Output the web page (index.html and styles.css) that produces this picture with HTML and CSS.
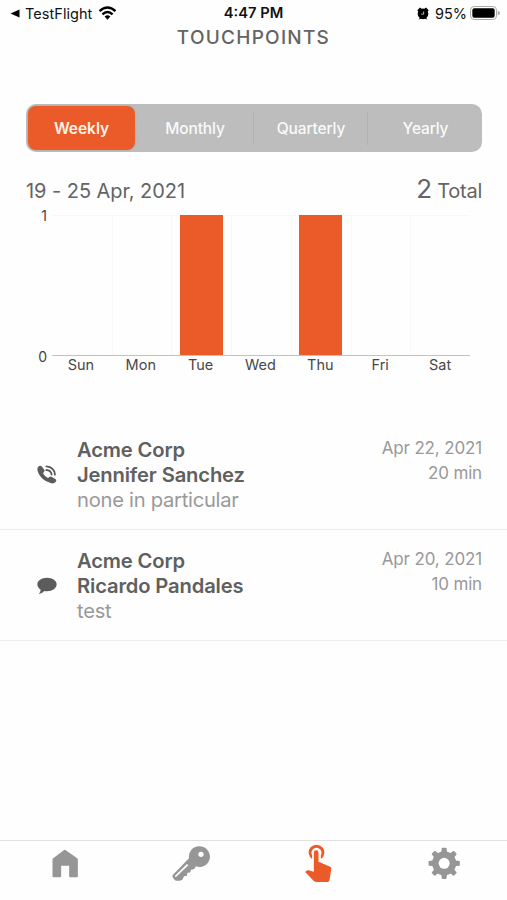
FILE: index.html
```html
<!DOCTYPE html>
<html lang="en">
<head>
<meta charset="utf-8">
<title>Touchpoints</title>
<link rel="stylesheet" href="styles.css">
</head>
<body>
<header class="status">
  <div class="status-left">
    <svg class="back" viewBox="0 0 10 10"><path d="M0 5 10 0.5v9z"/></svg>
    <span class="app-name">TestFlight</span>
    <svg class="wifi" viewBox="0 0 56 44"><g fill="none" stroke="#000" stroke-width="7.500"><path d="M3 16Q28-6 53 16"/><path d="M12 26Q28 11 44 26"/></g><path d="M19 33Q28 25 37 33L28 43z"/></svg>
  </div>
  <span class="clock">4:47 PM</span>
  <div class="status-right">
    <svg class="alarm" viewBox="0 0 36 38"><circle cx="18" cy="20" r="16"/><path d="M1 9 9 1l5 4L4 14zM35 9 27 1l-5 4 10 9zM5 37l5-7 5 4zM31 37l-5-7-5 4z"/><path d="M20 13v8h-7" fill="none" stroke="#ddd" stroke-width="2.500"/></svg>
    <span class="percent">95%</span>
    <svg class="battery" viewBox="0 0 90 42"><rect x="1.5" y="1.500" width="78" height="39" rx="11" fill="#fff" stroke="#aaa" stroke-width="3"/><rect x="7" y="7" width="67" height="28" rx="6"/><path d="M83 14q7 2 7 7t-7 7z" fill="#aaa"/></svg>
  </div>
</header>
<h1 class="title">TOUCHPOINTS</h1>

<nav class="segments">
  <span class="segment selected">Weekly</span>
  <span class="segment">Monthly</span>
  <span class="segment divided">Quarterly</span>
  <span class="segment divided">Yearly</span>
</nav>

<div class="summary">
  <span class="range">19 - 25 Apr, 2021</span>
  <span class="total"><span class="count">2</span> Total</span>
</div>

<section class="chart">
  <div class="axis"><span>1</span><span>0</span></div>
  <div class="plot">
    <div class="columns">
      <div class="column"></div>
      <div class="column"></div>
      <div class="column"><div class="bar"></div></div>
      <div class="column"></div>
      <div class="column"><div class="bar"></div></div>
      <div class="column"></div>
      <div class="column"></div>
    </div>
    <div class="days"><span>Sun</span><span>Mon</span><span>Tue</span><span>Wed</span><span>Thu</span><span>Fri</span><span>Sat</span></div>
  </div>
</section>

<main class="list">
  <article class="entry">
    <svg class="kind" viewBox="0 0 60 57"><path d="M3 6Q9 0 14 4L22 14Q24 18 20 22L18 25Q23 35 33 39L37 36Q41 33 45 36L56 43Q60 47 55 52Q50 57 41 54Q14 47 4 24Q-1 13 3 6z"/><g fill="none" stroke="#5c5c5c" stroke-width="5.500" stroke-linecap="round"><path d="M28 4Q52 6 54 29"/><path d="M28 15Q42 16 44 29"/></g></svg>
    <div class="who"><strong>Acme Corp</strong><strong>Jennifer Sanchez</strong><span class="note">none in particular</span></div>
    <div class="when"><span>Apr 22, 2021</span><span>20 min</span></div>
  </article>
  <article class="entry">
    <svg class="kind bubble" viewBox="0 0 60 57"><path d="M30 2C47 2 59 11 59 22S47 43 30 43Q26 43 22 42Q15 50 5 51Q11 45 11 38Q1 32 1 22C1 11 13 2 30 2z"/></svg>
    <div class="who"><strong>Acme Corp</strong><strong>Ricardo Pandales</strong><span class="note">test</span></div>
    <div class="when"><span>Apr 20, 2021</span><span>10 min</span></div>
  </article>
</main>

<footer class="tabs">
  <div class="tab"><svg viewBox="133.5 36 120 120"><path d="M190 60.500q3-2.500 6 0L230 85q2 1.500 2 4v50q0 3-3 3h-20q-3 0-3-3v-32h-24v32q0 3-3 3h-20q-3 0-3-3V89q0-2.500 2-4z"/></svg></div>
  <div class="tab"><svg viewBox="513 36 120 120"><path fill-rule="evenodd" d="M597 49a31 31 0 1 1-9 60l-6 9-9 1-2 8-9 2-1 8-9 2-4 9q-3 4-9 4h-10q-5 0-7-4l-4-6q-2-4 1-8l48-49A31 31 0 0 1 597 49zM603 65a8 8 0 1 0 0 16 8 8 0 1 0 0-16zM561 102L525 137q-2 4 3 4L565 106z"/></svg></div>
  <div class="tab active"><svg viewBox="130.5 36 120 120"><path d="M173 87a23.500 23.500 0 1 1 26 0v-11a15 15 0 1 0-26 0z"/><path d="M178 68q0-7 7-7t7 7v28l4 1 31 13q4 2 3.500 6L225 151q-1 5-6 5h-33q-5 0-8-3l-26-27 4-4q3-2 6-1l16 4z"/></svg></div>
  <div class="tab"><svg viewBox="511.5 36 120 120"><g transform="translate(569 100)"><path id="tooth" d="M-9-30l2-15q.3-2 2-2H5q1.700 0 2 2l2 15v60l-2 15q-.3 2-2 2H-5q-1.700 0-2-2l-2-15z"/><use href="#tooth" transform="rotate(45)"/><use href="#tooth" transform="rotate(90)"/><use href="#tooth" transform="rotate(135)"/><circle r="36"/><circle class="hole" r="16.500"/></g></svg></div>
</footer>
</body>
</html>
```

FILE: styles.css
```css
* { box-sizing: border-box; }
body {
  margin: 0;
  width: 507px;
  height: 900px;
  display: flex;
  flex-direction: column;
  overflow: hidden;
  background: #fefefe;
  color: #646464;
  font-family: Inter, "Liberation Sans", sans-serif;
}
svg { display: block; flex: none; }
span, strong { white-space: nowrap; }

.status {
  height: 27px;
  padding: 0 7px 0 10px;
  display: grid;
  grid-template-columns: 1fr auto 1fr;
  align-items: center;
  color: #111;
  font-size: 14.500px;
  line-height: 27px;
}
.status-left, .status-right { display: flex; align-items: center; }
.status-right { justify-content: flex-end; }
.back { width: 10px; height: 9px; margin-right: 5px; }
.app-name { letter-spacing: 0.05px; }
.wifi { width: 19px; height: 14px; margin: -2px 0 0 6px; }
.clock { font-weight: 600; font-size: 14.700px; margin-right: 3px; }
.alarm { width: 12px; height: 13px; margin-right: 6px; }
.percent { letter-spacing: 0; }
.battery { width: 30px; height: 14px; margin: -1px 0 0 3px; }

.title {
  margin: 0;
  height: 21px;
  line-height: 21px;
  text-align: center;
  font-size: 19px;
  font-weight: 500;
  letter-spacing: 1.250px;
}

.segments {
  margin: 56px 25px 0 26px;
  height: 48px;
  padding: 2px 0 2px 2px;
  display: grid;
  grid-template-columns: 107px 118px 114px 1fr;
  border-radius: 10px;
  background: #bdbdbe;
  color: #fafafa;
  font-size: 15.500px;
  font-weight: 500;
  letter-spacing: -0.05px;
}
.segment { display: flex; align-items: center; justify-content: center; }
.segment:not(.selected) { letter-spacing: -0.15px; padding-left: 2px; }
.selected { background: #eb5a29; border-radius: 8px; font-weight: 600; color: #fff4ea; box-shadow: 0 0 2px #8888; }
.divided { background: linear-gradient(#b1b1b2, #b1b1b2) left center / 1px 33px no-repeat; }

.summary {
  height: 50px;
  margin: 13px 25px 0 26px;
  display: flex;
  justify-content: space-between;
  align-items: baseline;
  font-size: 20px;
  line-height: 48px;
}
.range { letter-spacing: -0.050px; }
.total { letter-spacing: -0.250px; }
.count { font-size: 26px; }

.chart { display: flex; margin-left: 26px; height: 175px; }
.axis {
  width: 21px;
  height: 158px;
  margin: -8px 5px 0 0;
  display: flex;
  flex-direction: column;
  justify-content: space-between;
  text-align: right;
  font-size: 14px;
  line-height: 17px;
  color: #444;
}
.plot { width: 418px; }
.columns {
  height: 141px;
  display: grid;
  grid-template-columns: repeat(7, 1fr);
  border-top: 1px solid #f7f7f7;
  border-bottom: 1px solid #c2c2c2;
}
.column { display: flex; justify-content: center; }
.column + .column { border-left: 1px solid #f8f8f8; }
.bar { width: 43px; margin: -1px 1px 0 0; background: #eb5a29; }
.days {
  display: grid;
  grid-template-columns: repeat(7, 1fr);
  margin-left: -1px;
  text-align: center;
  font-size: 14.500px;
  line-height: 18px;
  color: #484848;
}

.list { margin-top: 29px; }
.entry {
  height: 111px;
  padding: 18px 25px 0 37px;
  display: flex;
  border-bottom: 1px solid #ebebeb;
}
.kind { width: 20px; height: 19px; margin: 28px 20px 0 0; fill: #5c5c5c; }
.bubble { margin-top: 29px; }
.who, .when { display: flex; flex-direction: column; line-height: 25px; }
.who { font-size: 20.200px; }
.who strong { font-weight: 600; color: #606060; letter-spacing: -0.150px; }
.note { color: #999; letter-spacing: -0.270px; }
.when { margin: -1px 0 0 auto; align-items: flex-end; font-size: 17px; letter-spacing: -0.150px; color: #999; }

.tabs {
  margin-top: auto;
  height: 60px;
  display: grid;
  grid-template-columns: 129px 124px 129px 1fr;
  border-top: 1px solid #e0e0e0;
  fill: #969696;
}
.tab { display: flex; justify-content: center; padding-top: 1px; }
.tab svg { width: 40px; height: 40px; }
.active { fill: #eb5a29; }
.hole { fill: #fefefe; }
```
